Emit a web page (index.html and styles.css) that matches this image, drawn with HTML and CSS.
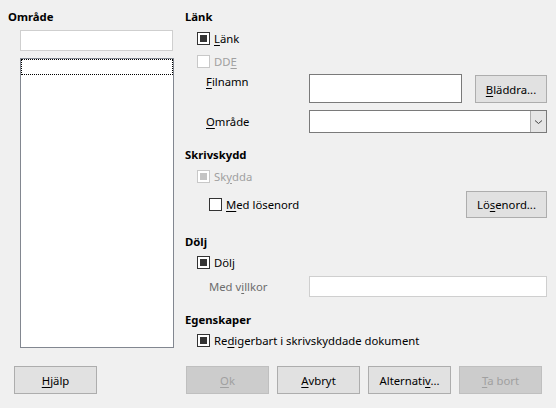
FILE: index.html
```html
<!DOCTYPE html>
<html lang="sv">
<head>
<meta charset="utf-8">
<link rel="stylesheet" href="styles.css">
</head>
<body>
<div class="dialog">
  <div class="main">
    <div class="left">
      <div class="heading left-heading">Område</div>
      <div class="name-input"></div>
      <div class="listbox"><div class="focus-row"></div></div>
    </div>
    <div class="right">
      <div class="heading h-link">Länk</div>
      <div class="check-row r-link"><span class="cb checked"></span><span><u>L</u>änk</span></div>
      <div class="check-row r-dde disabled"><span class="cb dis"></span><span>DD<u>E</u></span></div>
      <div class="field-row r-file">
        <span class="label"><u>F</u>ilnamn</span>
        <div class="input tall"></div>
        <div class="btn btn-browse"><span><u>B</u>läddra...</span></div>
      </div>
      <div class="field-row r-area">
        <span class="label"><u>O</u>mråde</span>
        <div class="combo">
          <div class="combo-text"></div>
          <div class="combo-btn">
            <svg width="9" height="6" viewBox="0 0 9 6"><path d="M1 1.5 L4.5 4.5 L8 1.5" fill="none" stroke="#444" stroke-width="1"/></svg>
          </div>
        </div>
      </div>
      <div class="heading h-protect">Skrivskydd</div>
      <div class="check-row r-protect disabled"><span class="cb checked dis"></span><span>Sk<u>y</u>dda</span></div>
      <div class="pw-row">
        <div class="check-row inner"><span class="cb"></span><span><u>M</u>ed lösenord</span></div>
        <div class="btn btn-pw"><span>Lö<u>s</u>enord...</span></div>
      </div>
      <div class="heading h-hide">Dölj</div>
      <div class="check-row r-hide"><span class="cb checked"></span><span>Döl<u>j</u></span></div>
      <div class="field-row r-cond">
        <span class="label gray">Med v<u>i</u>llkor</span>
        <div class="input light wide"></div>
      </div>
      <div class="heading h-props">Egenskaper</div>
      <div class="check-row r-edit"><span class="cb checked"></span><span>Re<u>d</u>igerbart i skrivskyddade dokument</span></div>
    </div>
  </div>
  <div class="footer">
    <div class="btn"><span><u>H</u>jälp</span></div>
    <div class="spacer"></div>
    <div class="btn disabled-btn"><span><u>O</u>k</span></div>
    <div class="btn"><span><u>A</u>vbryt</span></div>
    <div class="btn"><span>Alternati<u>v</u>...</span></div>
    <div class="btn disabled-btn"><span><u>T</u>a bort</span></div>
  </div>
</div>
</body>
</html>
```

FILE: styles.css
```css
* { box-sizing: border-box; }
html, body { margin: 0; padding: 0; }
body {
  width: 556px;
  height: 408px;
  background: #f0f0f0;
  font-family: "Noto Sans", "Open Sans", sans-serif;
  font-size: 11.3px;
  color: #000;
  overflow: hidden;
}
u { text-decoration: underline; text-underline-offset: 2px; }
.dialog { display: flex; flex-direction: column; }
.main { display: flex; height: 366px; }

.left { width: 185px; padding-left: 8px; display: flex; flex-direction: column; }
.heading { font-weight: bold; height: 16px; line-height: 16px; }
.left-heading { margin-top: 9px; }
.name-input {
  margin-top: 5px; margin-left: 12px;
  width: 153px; height: 21px;
  background: #fff; border: 1px solid #cfcfcf;
}
.listbox {
  margin-top: 7px; margin-left: 12px;
  width: 154px; height: 290px;
  background: #fff; border: 1px solid #828790;
  padding: 0;
}
.focus-row { height: 16px; border: 1px dotted #000; }

.right { flex: 1; display: flex; flex-direction: column; padding-right: 9px; }
.check-row { display: flex; align-items: center; height: 20px; padding-left: 12px; gap: 4px; }
.check-row.disabled { color: #a0a0a0; }
.cb {
  width: 13px; height: 13px; flex: none;
  border: 1px solid #333; background: #fff;
  display: flex; align-items: center; justify-content: center;
}
.cb.checked::after { content: ""; width: 7px; height: 7px; background: #333; }
.cb.dis { border-color: #c8c8c8; }
.cb.checked.dis::after { background: #c4c4c4; }

.h-link { margin-top: 9px; }
.r-link { margin-top: 3px; }
.r-dde { margin-top: 3px; }
.field-row { display: flex; padding-left: 21px; }
.label { width: 103px; line-height: 16px; }
.label.gray { color: #6d6d6d; }
.r-file { margin-top: 3px; align-items: flex-start; }
.input { background: #fff; border: 1px solid #7a7a7a; }
.input.tall { width: 153px; height: 29px; }
.input.light { border-color: #cfcfcf; }
.input.wide { width: 238px; height: 21px; }
.btn {
  height: 28px; width: 83px;
  background: #e1e1e1; border: 1px solid #adadad;
  display: flex; align-items: center; justify-content: center;
}
.btn-browse { width: 72px; margin-left: 13px; margin-top: 1px; height: 28px; }
.r-area { margin-top: 7px; align-items: center; }
.combo { display: flex; width: 238px; height: 23px; border: 1px solid #7a7a7a; background: #fff; }
.combo-text { flex: 1; }
.combo-btn {
  width: 16px; background: #e5e5e5; border-left: 1px solid #adadad;
  display: flex; align-items: center; justify-content: center;
}
.h-protect { margin-top: 14px; }
.r-protect { margin-top: 3px; }
.pw-row { display: flex; align-items: center; justify-content: space-between; margin-top: 5px; }
.check-row.inner { padding-left: 24px; }
.btn-pw { width: 81px; height: 27px; }
.h-hide { margin-top: 16px; }
.r-hide { margin-top: 2px; }
.r-cond { margin-top: 4px; align-items: center; padding-left: 24px; }
.r-cond .label { width: 100px; }
.h-props { margin-top: 15px; }
.r-edit { margin-top: 2px; }

.footer { display: flex; gap: 8px; padding-left: 14px; }
.footer .spacer { width: 73px; }
.disabled-btn { background: #cccccc; border-color: #bfbfbf; color: #a0a0a0; }
```
